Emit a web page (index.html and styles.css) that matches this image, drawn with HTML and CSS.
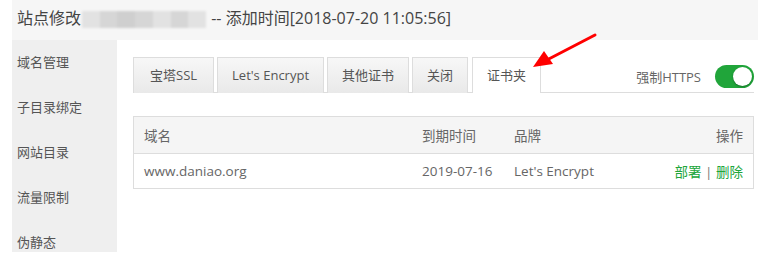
FILE: index.html
```html
<!DOCTYPE html>
<html lang="zh-CN">
<head>
<meta charset="utf-8">
<title>站点修改</title>
<link rel="stylesheet" href="styles.css">
</head>
<body>
<div class="dialog">
  <div class="title">站点修改<span class="blur"><i></i><i></i><i></i><i></i><i></i><i></i><i></i></span> -- 添加时间[2018-07-20 11:05:56]</div>
  <div class="body">
    <ul class="side">
      <li>域名管理</li>
      <li>子目录绑定</li>
      <li>网站目录</li>
      <li>流量限制</li>
      <li>伪静态</li>
    </ul>
    <div class="main">
      <div class="tabbar">
        <span class="tab tab-first">宝塔SSL</span>
        <span class="tab">Let's Encrypt</span>
        <span class="tab">其他证书</span>
        <span class="tab">关闭</span>
        <span class="tab active">证书夹</span>
        <div class="force">
          <span class="force-label">强制HTTPS</span>
          <span class="switch"><span class="knob"></span></span>
        </div>
        <svg class="arrow" width="70" height="40" viewBox="0 0 70 40">
          <line x1="64" y1="5" x2="12" y2="32" stroke="#f00" stroke-width="3" stroke-linecap="round"/>
          <polygon points="2,37 13,21 22,34" fill="#f00"/>
        </svg>
      </div>
      <table class="list">
        <thead>
          <tr><th class="c1">域名</th><th class="c2">到期时间</th><th class="c3">品牌</th><th class="c4">操作</th></tr>
        </thead>
        <tbody>
          <tr><td>www.daniao.org</td><td>2019-07-16</td><td>Let's Encrypt</td><td class="c4"><a>部署</a><span class="sep"> | </span><a>删除</a></td></tr>
        </tbody>
      </table>
    </div>
  </div>
</div>
</body>
</html>
```

FILE: styles.css
```css
html, body {
  margin: 0;
  padding: 0;
  background: #fff;
}
body {
  font-family: "Open Sans", "Noto Sans CJK SC", sans-serif;
  color: #555;
}
.dialog {
  margin-left: 12px;
  width: 746px;
}
.title {
  height: 40px;
  line-height: 36px;
  padding-left: 5px;
  font-size: 16px;
  color: #444;
  background: #f6f6f6;
  white-space: nowrap;
}
.blur {
  display: inline-flex;
  vertical-align: middle;
  width: 124px;
  height: 17px;
  margin: 0 1px 0 1px;
  filter: blur(1.2px);
}
.blur i {
  flex: 1;
  background: #d6d6d6;
}
.blur i:nth-child(odd) { background: #e2e2e2; }
.blur i:nth-child(3) { background: #cfcfcf; }
.body {
  display: flex;
  height: 212px;
}
.side {
  list-style: none;
  margin: 0;
  padding: 0;
  width: 105px;
  background: #efefef;
  font-size: 13px;
  color: #555;
}
.side li {
  height: 45px;
  line-height: 45px;
  padding-left: 5px;
}
.main {
  flex: 1;
  padding: 17px 4px 0 16px;
  background: #fff;
}
.tabbar {
  position: relative;
  display: flex;
  align-items: flex-end;
  gap: 3px;
  height: 35px;
  border-bottom: 1px solid #ddd;
}
.tab {
  box-sizing: border-box;
  height: 36px;
  line-height: 34px;
  padding: 0 14px;
  font-size: 13px;
  color: #555;
  border: 1px solid #ddd;
  border-bottom: none;
  background: linear-gradient(#f7f7f7, #e9e9e9);
  margin-bottom: -1px;
}
.tab-first {
  padding: 0 16px;
}
.tab.active {
  background: #fff;
  height: 36px;
  margin-left: 1px;
}
.force {
  margin-left: auto;
  align-self: center;
  display: flex;
  align-items: center;
  gap: 14px;
  margin-top: 4px;
}
.force-label {
  font-size: 13px;
  color: #666;
}
.switch {
  position: relative;
  width: 39px;
  height: 23px;
  border-radius: 12px;
  background: #20a53a;
  display: inline-block;
}
.knob {
  position: absolute;
  right: 2px;
  top: 2px;
  width: 19px;
  height: 19px;
  border-radius: 50%;
  background: #fff;
  box-shadow: 0 1px 2px rgba(0,0,0,0.3);
}
.arrow {
  position: absolute;
  left: 398px;
  top: -27px;
}
.list {
  margin-top: 23px;
  width: 100%;
  border-collapse: collapse;
  border: 1px solid #ddd;
  font-size: 13.5px;
  color: #666;
}
.list th {
  height: 36px;
  font-weight: normal;
  text-align: left;
  background: #f5f5f5;
  padding: 0 10px;
  border-bottom: 1px solid #ddd;
}
.list td {
  height: 34px;
  padding: 0 10px;
}
.c1 { width: 258px; }
.c2 { width: 72px; }
.list .c4 { text-align: right; }
.list a { color: #20a53a; }
.sep { color: #777; }
```
